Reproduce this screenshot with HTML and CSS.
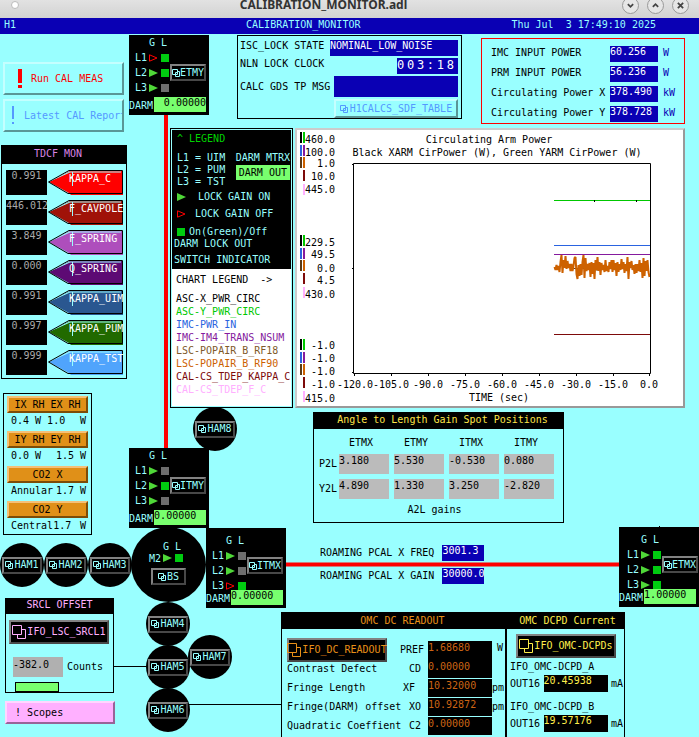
FILE: index.html
```html
<!DOCTYPE html>
<html lang="en">
<head>
<meta charset="utf-8">
<title>CALIBRATION_MONITOR.adl</title>
<link rel="stylesheet" href="styles.css">
</head>
<body>
<svg class="defs" aria-hidden="true">
  <symbol id="rel" viewBox="0 0 8 8"><path d="M.5 .5h5v5h-5zM5.500 2.500h2v5h-4v-4h2" fill="none" stroke="currentColor"/></symbol>
  <symbol id="rel-lg" viewBox="0 0 14 14"><path d="M.5 .5h9v9h-9zM9.500 4.500h4v9h-8v-4" fill="none" stroke="currentColor"/></symbol>
  <symbol id="on" viewBox="0 0 9 8"><path d="M0 0L9 4L0 8z" fill="#4fd838"/></symbol>
  <symbol id="off" viewBox="0 0 9 8"><path d="M.5 .8L8 4L.5 7.200z" fill="none" stroke="#f00"/></symbol>
  <symbol id="tag" viewBox="0 0 76 25">
    <path d="M1 12L22 1H75V25H23L21 23z" fill="currentColor"/>
    <path d="M2 11L22 2H73" fill="none" stroke="#9ff"/>
    <path d="M24.500 2V16" stroke="#9ff"/>
    <path d="M.5 12L21 .5H74.500V23.500H20z" fill="none" stroke="#000"/>
  </symbol>
</svg>

<header class="titlebar">
  <span class="dot"></span>
  <h1>CALIBRATION_MONITOR.adl</h1>
  <button aria-label="Minimize"><svg viewBox="0 0 17 17"><path d="M5.500 7l3 3 3-3" /></svg></button>
  <button aria-label="Maximize"><svg viewBox="0 0 17 17"><path d="M5.500 10l3-3 3 3" /></svg></button>
  <button aria-label="Close"><svg viewBox="0 0 17 17"><path d="M5.500 5.500l6 6M11.500 5.500l-6 6" /></svg></button>
</header>
<div class="infobar"><span>H1</span><span>CALIBRATION_MONITOR</span><time>Thu Jul &nbsp;3 17:49:10 2025</time></div>

<main>
  <div class="synoptic">
    <svg class="wires" aria-hidden="true">
      <path class="beam" d="M166 81V414M286 530.500H619"/>
      <path class="wire" d="M114 632.500H148M188 670.500H281M659.500 492V494"/>
    </svg>
    <div class="tank ham1"><button class="rel"><svg><use href="#rel"/></svg>HAM1</button></div>
    <div class="tank ham2"><button class="rel"><svg><use href="#rel"/></svg>HAM2</button></div>
    <div class="tank ham3"><button class="rel"><svg><use href="#rel"/></svg>HAM3</button></div>
    <div class="tank ham4"><button class="rel"><svg><use href="#rel"/></svg>HAM4</button></div>
    <div class="tank ham5"><button class="rel"><svg><use href="#rel"/></svg>HAM5</button></div>
    <div class="tank ham6"><button class="rel"><svg><use href="#rel"/></svg>HAM6</button></div>
    <div class="tank ham7"><button class="rel"><svg><use href="#rel"/></svg>HAM7</button></div>
    <div class="tank ham8"><button class="rel"><svg><use href="#rel"/></svg>HAM8</button></div>
    <div class="tank bs">
      <div class="gains"><span></span><span>G</span><span>L</span>
        <span>M2</span><svg><use href="#on"/></svg><i class="led"></i></div>
      <button class="rel"><svg><use href="#rel"/></svg>BS</button>
    </div>

    <section class="optic etmy">
      <div class="body">
        <div class="gains"><span></span><span>G</span><span>L</span>
          <span>L1</span><svg><use href="#off"/></svg><i class="led"></i>
          <span>L2</span><svg><use href="#on"/></svg><i class="led"></i>
          <span>L3</span><svg><use href="#on"/></svg><i class="led idle"></i></div>
        <button class="rel"><svg><use href="#rel"/></svg>ETMY</button>
      </div>
      <div class="darm"><span>DARM</span><output class="end">0.00000</output></div>
    </section>
    <section class="optic itmy">
      <div class="body">
        <div class="gains"><span></span><span>G</span><span>L</span>
          <span>L1</span><svg><use href="#on"/></svg><i class="led idle"></i>
          <span>L2</span><svg><use href="#on"/></svg><i class="led"></i>
          <span>L3</span><svg><use href="#on"/></svg><i class="led idle"></i></div>
        <button class="rel"><svg><use href="#rel"/></svg>ITMY</button>
      </div>
      <div class="darm"><span>DARM</span><output>0.00000</output></div>
    </section>
    <section class="optic low itmx">
      <div class="body">
        <div class="gains"><span></span><span>G</span><span>L</span>
          <span>L1</span><svg><use href="#on"/></svg><i class="led idle"></i>
          <span>L2</span><svg><use href="#on"/></svg><i class="led idle"></i>
          <span>L3</span><svg><use href="#off"/></svg><i class="led"></i></div>
        <button class="rel"><svg><use href="#rel"/></svg>ITMX</button>
      </div>
      <div class="darm"><span>DARM</span><output>0.00000</output></div>
    </section>
    <section class="optic low etmx">
      <div class="body">
        <div class="gains"><span></span><span>G</span><span>L</span>
          <span>L1</span><svg><use href="#on"/></svg><i class="led"></i>
          <span>L2</span><svg><use href="#on"/></svg><i class="led"></i>
          <span>L3</span><svg><use href="#on"/></svg><i class="led"></i></div>
        <button class="rel"><svg><use href="#rel"/></svg>ETMX</button>
      </div>
      <div class="darm"><span>DARM</span><output>1.00000</output></div>
    </section>
  </div>

  <aside class="side">
    <div class="commands">
      <button class="cmd run"><svg viewBox="0 0 4 19"><path d="M0 0h4v14H0zM0 16h4v3H0z"/></svg>Run CAL MEAS</button>
      <button class="cmd report"><svg viewBox="0 0 4 19"><path d="M1 0h2v13H1zM1 16h2v2H1z"/></svg>Latest CAL Report</button>
    </div>

    <section class="panel tdcf">
      <h2>TDCF MON</h2>
      <ul>
        <li><output>0.991</output><span class="tag t1"><svg><use href="#tag"/></svg><b>KAPPA_C</b></span></li>
        <li><output>446.012</output><span class="tag t2"><svg><use href="#tag"/></svg><b>F_CAVPOLE</b></span></li>
        <li><output>3.849</output><span class="tag t3"><svg><use href="#tag"/></svg><b>F_SPRING</b></span></li>
        <li><output>0.000</output><span class="tag t4"><svg><use href="#tag"/></svg><b>Q_SPRING</b></span></li>
        <li><output>0.991</output><span class="tag t5"><svg><use href="#tag"/></svg><b>KAPPA_UIM</b></span></li>
        <li><output>0.997</output><span class="tag t6"><svg><use href="#tag"/></svg><b>KAPPA_PUM</b></span></li>
        <li><output>0.999</output><span class="tag t7"><svg><use href="#tag"/></svg><b>KAPPA_TST</b></span></li>
      </ul>
    </section>

    <section class="panel heaters">
      <button>IX RH EX RH</button>
      <p><span>0.4 W 1.0</span><span>W</span></p>
      <button>IY RH EY RH</button>
      <p><span>0.0 W</span><span>1.5 W</span></p>
      <button>CO2 X</button>
      <p><span>Annular</span><span>1.7 W</span></p>
      <button>CO2 Y</button>
      <p><span>Central1.7</span><span>W</span></p>
    </section>

    <section class="panel srcl">
      <h2>SRCL OFFSET</h2>
      <button class="rel wide pink"><svg><use href="#rel-lg"/></svg>IFO_LSC_SRCL1</button>
      <label><input value="-382.0">Counts</label>
      <div class="state"></div>
    </section>
    <button class="scopes">! Scopes</button>
  </aside>

  <div class="content">
    <div class="top">
      <section class="panel lock">
        <div><span>ISC_LOCK STATE</span><output class="blue state-text">NOMINAL_LOW_NOISE</output></div>
        <div><span>NLN LOCK CLOCK</span><output class="blue clock"><span>0</span><span>0</span><span>3</span><span>:</span><span>1</span><span>8</span></output></div>
        <div class="msg"><span>CALC GDS TP MSG</span><output class="blue"></output></div>
        <button class="sdf"><svg><use href="#rel"/></svg>H1CALCS_SDF_TABLE</button>
      </section>
      <section class="power">
        <div><span>IMC INPUT POWER</span><output class="blue">60.256</output><em>W</em></div>
        <div><span>PRM INPUT POWER</span><output class="blue">56.236</output><em>W</em></div>
        <div><span>Circulating Power X</span><output class="blue">378.490</output><em>kW</em></div>
        <div><span>Circulating Power Y</span><output class="blue">378.728</output><em>kW</em></div>
      </section>
    </div>

    <div class="middle">
      <section class="legend">
        <div class="keys">
          <h2>^ LEGEND</h2>
          <div class="levels">
            <div>L1 = UIM<br>L2 = PUM<br>L3 = TST</div>
            <div class="links"><span>DARM MTRX</span><button>DARM OUT</button></div>
          </div>
          <p class="key"><svg><use href="#on"/></svg>LOCK GAIN ON</p>
          <p class="key"><svg><use href="#off"/></svg>LOCK GAIN OFF</p>
          <p class="key switch"><i class="led"></i>On(Green)/Off</p>
          <p class="note">DARM LOCK OUT</p>
          <p class="note last">SWITCH INDICATOR</p>
        </div>
        <div class="traces">
          <h2>CHART LEGEND &nbsp;-&gt;</h2>
          <ul>
            <li class="c1">ASC-X_PWR_CIRC</li>
            <li class="c2">ASC-Y_PWR_CIRC</li>
            <li class="c3">IMC-PWR_IN</li>
            <li class="c4">IMC-IM4_TRANS_NSUM</li>
            <li class="c5">LSC-POPAIR_B_RF18</li>
            <li class="c6">LSC-POPAIR_B_RF90</li>
            <li class="c7">CAL-CS_TDEP_KAPPA_C</li>
            <li class="c8">CAL-CS_TDEP_F_C</li>
          </ul>
        </div>
      </section>

      <section class="chart">
        <svg viewBox="297 130 386 276" role="img" aria-label="Circulating Arm Power strip chart">
          <defs>
            <g id="swatches">
              <path fill="#000" d="M300 0h2v11h-2z"/><path fill="#00c800" d="M303 0h2v11h-2z"/>
              <path fill="#2a63e0" d="M300 13h2v11h-2z"/><path fill="#851a9e" d="M303 13h2v11h-2z"/>
              <path fill="#5c3a14" d="M300 25h2v11h-2z"/><path fill="#cd6100" d="M303 25h2v11h-2z"/>
              <path fill="#7d0a0a" d="M303 38h2v11h-2z"/><path fill="#ffb0ff" d="M303 52h2v11h-2z"/>
            </g>
          </defs>
          <use href="#swatches" y="132"/><use href="#swatches" y="235"/><use href="#swatches" y="339"/>
          <g text-anchor="end">
            <text x="335" y="143">460.0</text><text x="335" y="156">100.0</text><text x="335" y="167">1.0</text><text x="335" y="180">10.0</text><text x="335" y="193">445.0</text>
            <text x="335" y="246">229.5</text><text x="335" y="258">49.5</text><text x="335" y="272">0.0</text><text x="335" y="284">4.5</text><text x="335" y="298">430.0</text>
            <text x="335" y="349">-1.0</text><text x="335" y="362">-1.0</text><text x="335" y="375">-1.0</text><text x="335" y="388">-1.0</text><text x="335" y="402">415.0</text>
          </g>
          <g text-anchor="middle">
            <text x="489" y="143">Circulating Arm Power</text>
            <text x="497" y="156">Black XARM CirPower (W), Green YARM CirPower (W)</text>
            <text x="355" y="388">-120.0</text><text x="391" y="388">-105.0</text><text x="428" y="388">-90.0</text><text x="465" y="388">-75.0</text><text x="502" y="388">-60.0</text><text x="539" y="388">-45.0</text><text x="576" y="388">-30.0</text><text x="613" y="388">-15.0</text><text x="649" y="388">0.0</text>
            <text x="499" y="401">TIME (sec)</text>
          </g>
          <g fill="none">
            <path stroke="#000" d="M352 164.500h2M352 268.500h2M352 372.500h2M354.500 373v3M391.500 373v3M428.500 373v3M465.500 373v3M502.500 373v3M539.500 373v3M576.500 373v3M613.500 373v3M649.500 373v3"/>
            <path stroke="#00c800" d="M554 200.500h96"/>
            <path stroke="#000" d="M594.500 200v2M636.500 200v2"/>
            <path stroke="#2a63e0" d="M554 245.500h96"/>
            <path stroke="#851a9e" d="M554 254.500h96"/>
            <path stroke="#5c3a14" d="M554 267.500h4M570 268.500h14M588 268.500h6M597 267v4M601 268.500h9M616 268.500h10M629 267v4M634 268.500h14"/>
            <path class="noise" d="M554.500 267L555.500 270L556.500 265L557.500 270L558.500 266L559.500 272L560.500 262L561.500 255L562.500 273L563.500 260L564.500 268L565.500 256L566.500 269L567.500 261L568.500 268L569.500 264L570.500 271L571.500 264L572.500 271L573.500 266L574.500 258L575.500 257L576.500 274L577.500 279L578.500 265L579.500 276L580.500 264L581.500 275L582.500 262L583.500 255L584.500 278L585.500 258L586.500 271L587.500 264L588.500 270L589.500 263L590.500 277L591.500 262L592.500 274L593.500 263L594.500 279L595.500 260L596.500 270L597.500 257L598.500 271L599.500 262L600.500 275L601.500 263L602.500 270L603.500 265L604.500 272L605.500 260L606.500 271L607.500 266L608.500 272L609.500 262L610.500 269L611.500 260L612.500 272L613.500 260L614.500 270L615.500 263L616.500 276L617.500 262L618.500 272L619.500 264L620.500 270L621.500 259L622.500 269L623.500 262L624.500 273L625.500 264L626.500 271L627.500 257L628.500 279L629.500 262L630.500 268L631.500 261L632.500 270L633.500 265L634.500 274L635.500 264L636.500 273L637.500 264L638.500 271L639.500 260L640.500 272L641.500 263L642.500 278L643.500 258L644.500 276L645.500 261L646.500 271L647.500 260L648.500 272L649.500 277"/>
            <path stroke="#7d0a0a" d="M554 334.500h96"/>
            <path stroke="#000" d="M353.500 163.500H650.500V373.500H353.500z"/>
          </g>
        </svg>
      </section>
    </div>

    <section class="panel a2l">
      <h2>Angle to Length Gain Spot Positions</h2>
      <table>
        <thead><tr><td></td><th>ETMX</th><th>ETMY</th><th>ITMX</th><th>ITMY</th></tr></thead>
        <tbody>
          <tr><th>P2L</th><td class="v">3.180</td><td class="v">5.530</td><td class="v">-0.530</td><td class="v">0.080</td></tr>
          <tr><th>Y2L</th><td class="v">4.890</td><td class="v">1.330</td><td class="v">3.250</td><td class="v">-2.820</td></tr>
        </tbody>
      </table>
      <p>A2L gains</p>
    </section>

    <section class="roaming">
      <div><span>ROAMING PCAL X FREQ</span><output class="blue">3001.3</output></div>
      <div><span>ROAMING PCAL X GAIN</span><output class="blue">30000.0</output></div>
    </section>

    <div class="bottom">
      <section class="panel omc">
        <h2>OMC DC READOUT</h2>
        <div class="row first"><button class="rel wide orange"><svg><use href="#rel-lg"/></svg>IFO_DC_READOUT</button><span>PREF</span><output>1.68680</output><em>W</em></div>
        <div class="row"><span class="name">Contrast Defect</span><span>CD</span><output>0.00000</output><em></em></div>
        <div class="row"><span class="name">Fringe Length</span><span>XF&nbsp;</span><output>10.32000</output><em>pm</em></div>
        <div class="row"><span class="name">Fringe(DARM) offset</span><span>XO</span><output>10.92872</output><em>pm</em></div>
        <div class="row"><span class="name">Quadratic Coeffient</span><span>C2</span><output>0.00000</output><em></em></div>
      </section>
      <section class="panel dcpd">
        <h2>OMC DCPD Current</h2>
        <button class="rel wide yellow"><svg><use href="#rel-lg"/></svg>IFO_OMC-DCPDs</button>
        <p>IFO_OMC-DCPD_A</p>
        <div class="out"><span>OUT16</span><output>20.45938</output><span>mA</span></div>
        <p>IFO_OMC-DCPD_B</p>
        <div class="out"><span>OUT16</span><output>19.57176</output><span>mA</span></div>
      </section>
    </div>
  </div>
</main>
</body>
</html>
```
FILE: styles.css
```css
* { box-sizing: border-box; }
body {
  margin: 0;
  min-height: 100vh;
  display: flex;
  flex-direction: column;
  overflow: hidden;
  background: #9ff;
  color: #000;
  font: 10px/12px "DejaVu Sans Mono", monospace;
}
h1, h2, p, ul { margin: 0; padding: 0; font: inherit; list-style: none; }
button, input { margin: 0; padding: 0; border: 0; border-radius: 0; font: inherit; color: inherit; background: none; white-space: nowrap; }
em, b { font: inherit; }
svg { display: block; flex: none; }
output { display: block; overflow: hidden; white-space: nowrap; }
.defs { position: absolute; width: 0; height: 0; }

.titlebar {
  display: flex;
  align-items: flex-end;
  gap: 8px;
  height: 18px;
  padding: 0 10px 4px 11px;
  overflow: hidden;
  background: linear-gradient(#e2e2e2, #d2d2d2);
}
.titlebar h1 {
  flex: 1;
  padding-left: 6px;
  text-align: center;
  font: bold 12px/14px "Noto Sans", sans-serif;
  color: #333;
  margin-bottom: 2px;
}
.titlebar button { width: 17px; height: 17px; border-radius: 50%; border: 1px solid #999; background: #e6e6e6; }
.titlebar button svg { width: 15px; height: 15px; fill: none; stroke: #444; stroke-width: 2; }
.dot { width: 8px; height: 8px; margin-bottom: 5px; border-radius: 50%; background: #fff; border: 1px solid #bbb; }

.infobar { display: flex; height: 16px; padding: 1px 43px 0 4px; background: #0a00b4; color: #9ff; }
.infobar span:nth-child(2) { margin-left: 230px; flex: 1; }

main { position: relative; flex: 1; display: flex; }

/* interferometer schematic */
.synoptic { position: absolute; inset: 0; color: #9ff; }
.wires { width: 100%; height: 100%; fill: none; }
.beam { stroke: #f00; stroke-width: 4; }
.wire { stroke: #000; }
.rel {
  display: flex;
  align-items: center;
  justify-content: center;
  gap: 1px;
  height: 17px;
  border: 2px solid;
  border-color: #828282 #484848 #484848 #828282;
  background: #000;
}
.rel svg, .sdf svg { width: 8px; height: 8px; }
.rel.wide { width: 100px; height: 24px; }
.rel.wide svg { width: 14px; height: 14px; }
.tank {
  position: absolute;
  display: flex;
  align-items: center;
  justify-content: center;
  width: 44px;
  height: 44px;
  border-radius: 50%;
  background: #000;
}
.tank .rel { width: 40px; flex: none; }
.ham1 { left: 0; top: 509px; }
.ham2 { left: 44px; top: 509px; }
.ham3 { left: 88px; top: 509px; }
.ham4 { left: 146px; top: 568px; }
.ham5 { left: 146px; top: 611px; }
.ham6 { left: 146px; top: 654px; }
.ham7 { left: 188px; top: 601px; }
.ham8 { left: 193px; top: 373px; }
.bs { left: 131px; top: 493px; width: 75px; height: 75px; flex-direction: column; gap: 4px; padding-bottom: 4px; }
.bs .rel { width: 35px; }
.gains { display: grid; grid-template-columns: 12px 10px 9px; column-gap: 2px; align-items: center; grid-auto-rows: 15px; }
.gains > span { line-height: 15px; }
.bs .gains { grid-auto-rows: 12px; margin-right: 4px; }
.gains svg, .key svg { width: 9px; height: 8px; }
.led { width: 8px; height: 8px; background: #00cc10; }
.led.idle { background: #6e6e6e; }
.optic { position: absolute; width: 80px; height: 80px; padding: 0 3px 3px 0; display: flex; flex-direction: column; justify-content: space-between; background: #000; }
.optic .body { display: flex; padding-left: 6px; justify-content: space-between; }
.optic .rel { width: 36px; margin-top: 29px; gap: 0; flex: none; }
.optic .gains { flex: none; width: 35px; }
.optic.low .gains { margin-top: 5px; }
.optic .rel svg { width: 8px; }
.darm { display: flex; align-items: flex-end; line-height: 12px; }
.optic .darm output { flex: 1; margin-left: 1px; height: 15px; background: #78ff6e; color: #000; }
.darm .end { text-align: right; }
.optic .body + .darm { margin-top: -5px; }
.etmy { left: 129px; top: 1px; }
.itmy { left: 129px; top: 414px; }
.itmx { left: 206px; top: 494px; }
.etmx { right: 0; top: 493px; }
.etmx .body { padding-left: 8px; }

/* left-hand column */
.side { position: relative; flex: none; width: 127px; padding: 28px 0 0 1px; pointer-events: none; }
.side button, .side input { pointer-events: auto; }
.commands { display: grid; gap: 4px; padding: 0 3px 0 2px; }
.cmd { display: flex; align-items: center; height: 33px; overflow: hidden; border: 2px solid; border-color: #c4ffff #5a9696 #5a9696 #c4ffff; }
.cmd svg { width: 4px; height: 19px; fill: currentColor; }
.run { padding-left: 13px; gap: 9px; color: #f00; }
.report { padding-left: 6px; gap: 9px; color: #59f; }
.panel { border: 1px solid #000; }
.panel h2 { background: #000; text-align: center; }
.tdcf { margin-top: 13px; height: 234px; }
.tdcf h2 { height: 18px; padding: 2px 12px 0 0; color: #d884e4; }
.tdcf ul { display: grid; gap: 5px; padding: 6px 2px 0 4px; }
.tdcf li { display: flex; justify-content: space-between; height: 25px; }
.tdcf output { width: 41px; height: 25px; background: #000; color: #aaa; text-align: center; }
.tag { display: grid; width: 76px; }
.tag > * { grid-area: 1 / 1; }
.tag svg { width: 76px; height: 25px; }
.tag b { padding: 3px 0 0 21px; color: #fff; }
.t1 { color: #f00; }
.t2 { color: #a01208; }
.t3 { color: #ae4ebc; }
.t4 { color: #5d0a74; }
.t5 { color: #2a5790; }
.t6 { color: #216a00; }
.t7 { color: #50a4fc; }
.heaters { margin: 14px 0 0 2px; width: 89px; height: 142px; padding: 2px 3px 0; }
.heaters button { display: block; width: 100%; height: 17px; border: 2px solid; border-color: #f4c078 #7c4c08 #7c4c08 #f4c078; background: #e09018; line-height: 13px; }
.heaters p { display: flex; justify-content: space-between; height: 18px; padding: 2px 2px 0 4px; white-space: nowrap; }
.srcl { display: flex; flex-direction: column; margin: 63px 0 0 4px; width: 109px; height: 95px; padding: 0 3px; }
.srcl h2 { height: 15px; margin: 0 -3px; color: #ffb0ff; }
.srcl .rel { margin-top: 6px; }
.pink { color: #ffb0ff; }
.srcl label { display: flex; align-items: center; gap: 4px; margin: 13px 0 0 4px; }
.srcl input { width: 50px; height: 20px; padding-bottom: 6px; background: #b0b0b0; }
.state { width: 44px; height: 10px; margin: 5px 0 0 6px; border: 1px solid #000; background: #78ff6e; }
.scopes { display: block; width: 110px; height: 23px; margin: 8px 0 0 4px; padding-left: 8px; border: 2px solid; border-color: #ffd6ff #986498 #986498 #ffd6ff; background: #ffb0ff; text-align: left; }

/* right-hand area */
.content { position: relative; flex: 1; min-width: 0; display: flex; flex-direction: column; padding: 1px 14px 0 43px; pointer-events: none; }
.content button { pointer-events: auto; }
.blue { background: #0a00b4; color: #fff; }
.top { display: flex; justify-content: space-between; align-items: flex-start; padding-left: 67px; height: 93px; }
.lock { display: grid; grid-template-rows: 16px 16px 21px 19px; gap: 2px; width: 225px; height: 84px; padding: 4px 3px 0 2px; }
.lock > div { display: flex; justify-content: space-between; }
.lock .state-text { width: 128px; }
.lock .clock { display: flex; justify-content: space-between; width: 61px; padding-right: 4px; font-size: 12px; line-height: 15px; }
.lock .msg { align-items: stretch; line-height: 21px; }
.msg output { width: 124px; }
.sdf { display: flex; align-items: center; justify-content: center; gap: 2px; width: 124px; justify-self: end; border: 2px solid; border-color: #c4ffff #5a9696 #5a9696 #c4ffff; color: #59f; }
.power { display: grid; gap: 4px; width: 204px; margin-top: 3px; padding: 7px 0 0 9px; border: 1px solid #f00; height: 86px; align-content: start; }
.power div { display: grid; grid-template-columns: 1fr 48px 21px; column-gap: 5px; height: 16px; white-space: nowrap; }
.power span { min-width: 0; }
.power span, .power em { padding-top: 1px; }
.power em { color: #0a00b4; }
.middle { display: flex; gap: 2px; height: 280px; }
.legend { display: flex; flex-direction: column; flex: none; width: 123px; border: 1px solid #000; padding: 1px; }
.keys { height: 139px; padding: 3px 1px 0 5px; background: #000; color: #9ff; }
.keys h2 { color: #00d200; }
.levels { display: flex; justify-content: space-between; margin-top: 7px; white-space: nowrap; }
.links { display: flex; flex-direction: column; gap: 1px; }
.links button { height: 15px; background: #78ff6e; color: #000; }
.key { display: flex; align-items: center; gap: 12px; height: 16px; margin-top: 1px; }
.key + .key { gap: 9px; }
.key.key.switch { gap: 4px; height: 12px; margin-top: 4px; }
.note { margin-left: -3px; }
.note.last { margin-top: 4px; }
.traces { flex: 1; padding: 5px 0 0 4px; background: #fff; white-space: nowrap; }
.traces ul { padding-top: 6px; line-height: 13px; }
.c2 { color: #00c800; }
.c3 { color: #2a63e0; }
.c4 { color: #851a9e; }
.c5 { color: #80592a; }
.c6 { color: #cd6100; }
.c7 { color: #7d0a0a; }
.c8 { color: #ffb0ff; }
.chart { flex: 1; min-width: 0; border: 2px solid; border-color: #ccc #999 #999 #ccc; background: #fff; }
.chart > svg { width: 100%; height: 100%; }
.noise { stroke: #cd6100; stroke-width: 2; stroke-linejoin: bevel; }
.a2l { align-self: flex-start; width: 251px; height: 111px; margin: 4px 0 0 143px; }
.a2l h2 { height: 16px; padding-left: 8px; color: #ffe64a; line-height: 14px; }
.a2l table { width: 245px; margin-top: 3px; border-collapse: separate; border-spacing: 5px; table-layout: fixed; }
.a2l th, .a2l td { padding: 0; font-weight: normal; }
.a2l thead td { width: 15px; }
.a2l thead th { height: 11px; padding-right: 6px; }
.a2l .v { height: 20px; background: #bbb; vertical-align: top; line-height: 14px; }
.a2l p { text-align: center; padding-right: 8px; }
.roaming { display: grid; gap: 7px; margin: 22px 0 0 150px; }
.roaming div { display: flex; gap: 8px; height: 16px; }
.roaming span { line-height: 16px; }
.roaming .blue { width: 42px; }
.bottom { flex: 1; display: flex; margin: 28px 0 0 111px; }
.bottom .panel { border-bottom: 0; }
.omc { width: 225px; }
.omc h2 { height: 16px; padding-left: 18px; color: #e89018; line-height: 16px; }
.row { display: grid; grid-template-columns: 1fr auto 64px 13px; height: 18px; margin-bottom: 1px; padding-left: 5px; white-space: nowrap; }
.row > span { padding-right: 7px; line-height: 18px; }
.row > .name { min-width: 0; padding: 0; }
.row.first { margin-top: 12px; }
.row.first > span { padding-right: 4px; }
.row.first .rel { margin-top: -3px; }
.row output { background: #000; color: #cd6414; line-height: 14px; }
.row em { line-height: 18px; }
.row.first em { padding-left: 5px; line-height: 14px; }
.orange { color: #e89018; }
.dcpd { width: 119px; }
.dcpd h2 { height: 16px; padding-left: 4px; color: #ffee4a; line-height: 16px; }
.dcpd .rel { margin: 5px 0 0 9px; }
.yellow { color: #ffee4a; }
.dcpd p { padding: 3px 0 0 3px; }
.out { display: flex; justify-content: space-between; align-items: center; margin: 2px 1px 6px 3px; }
.out output { width: 64px; height: 17px; background: #000; color: #ffee4a; }
text { font: 10px "DejaVu Sans Mono", monospace; fill: #000; }
```
